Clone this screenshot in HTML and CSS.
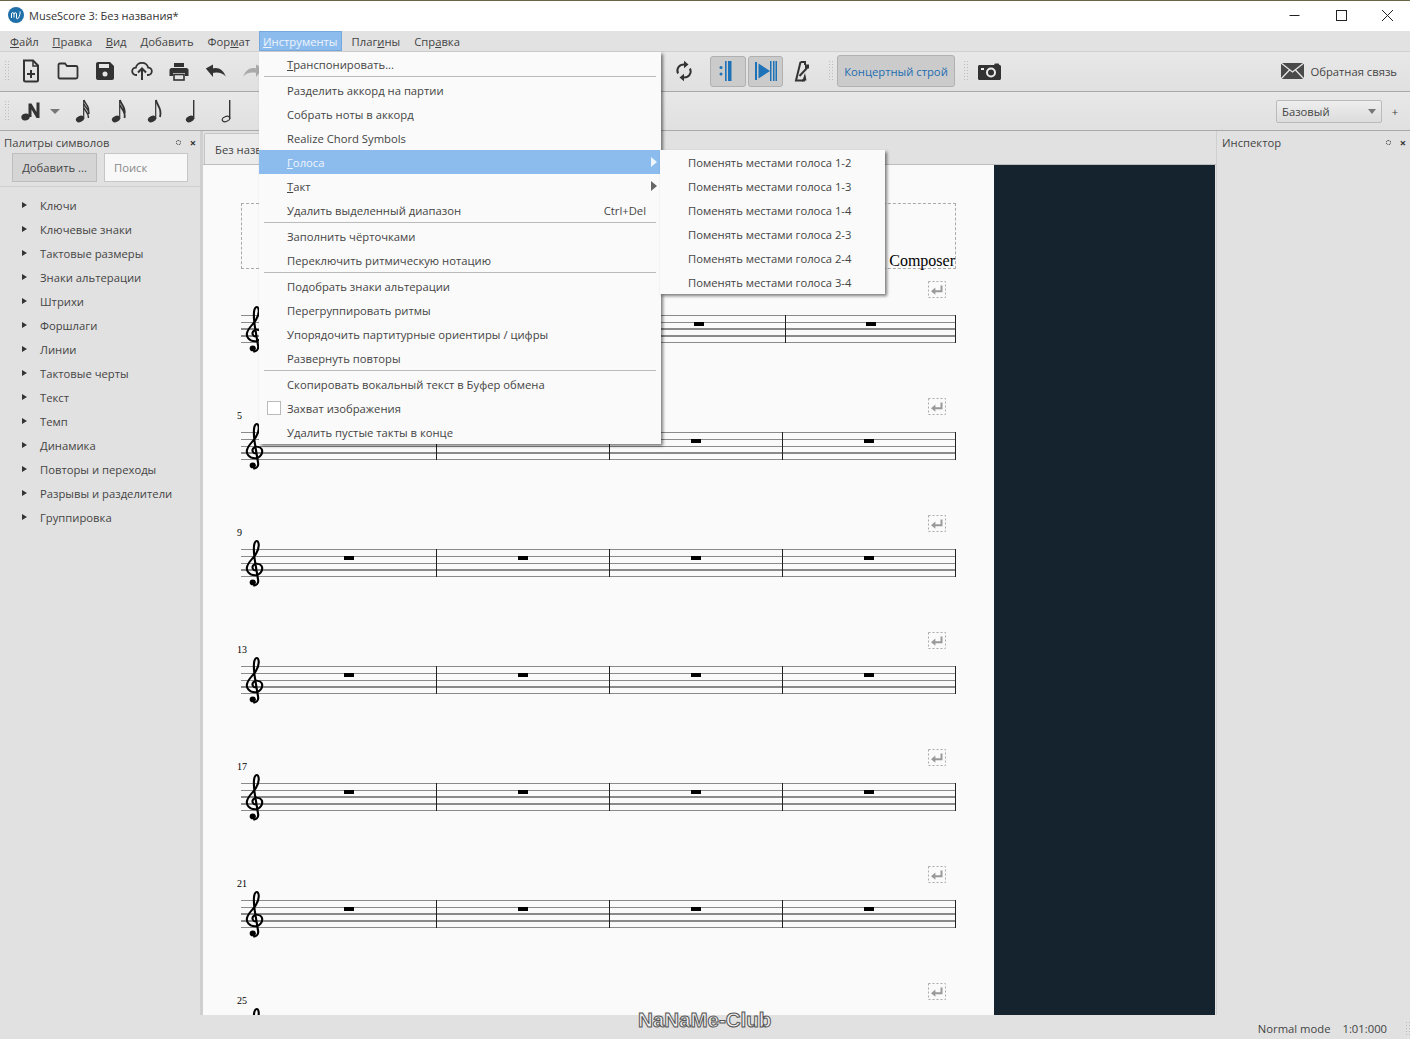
FILE: index.html
```html
<!DOCTYPE html>
<html lang="ru">
<head>
<meta charset="utf-8">
<title>MuseScore 3: Без названия*</title>
<link rel="stylesheet" href="styles.css">
</head>
<body>
<svg class="defs" width="0" height="0" aria-hidden="true">
  <symbol id="clef" viewBox="0 0 18 48" preserveAspectRatio="none">
    <path d="M10 31.500C7.400 31.600 5.800 28.600 7.400 26.400C9.200 24 13.600 24.400 15 27.200C16.600 31 13.600 36.300 8.800 36.300C4 36.300 1 32 1.800 28C2.800 23 7.400 19.400 9.800 15C12.200 10.400 13 6 11.800 3C11 1 9.200 1.800 8.400 5C7.600 9 8 16 9.400 25L11.800 41C12.400 45 9.600 47 7.400 46.400" fill="none" stroke="#000" stroke-width="1.900"/>
    <circle cx="7" cy="43.400" r="2.800" fill="#000"/>
  </symbol>
  <symbol id="break" viewBox="0 0 18 18">
    <rect x=".5" y=".5" width="17" height="16" fill="none" stroke="#aaa" stroke-dasharray="2 2"/>
    <path d="M13.500 4.500V10.200H6.500" fill="none" stroke="#999" stroke-width="2"/>
    <path d="M3 10.200L7.400 6.600V13.800Z" fill="#999"/>
  </symbol>
</svg>

<div class="app">
  <header class="titlebar">
    <div class="app-logo">
      <svg viewBox="0 0 16 16" width="16" height="16"><circle cx="8" cy="8" r="8" fill="#1f6fa8"/><path d="M3.500 11V7C3.500 5.200 6 5.200 6 7V10.500M6 7C6 5.200 8.500 5.200 8.500 7V11C8.500 12 10 12 10.500 11C11.500 9 12.500 6 12 4.500" fill="none" stroke="#fff" stroke-width="1"/></svg>
    </div>
    <span class="app-title">MuseScore 3: Без названия*</span>
    <div class="win-controls">
      <svg viewBox="0 0 46 20" width="46" height="20"><path d="M17.500 10.500H27.500" stroke="#222" fill="none"/></svg>
      <svg viewBox="0 0 46 20" width="46" height="20"><rect x="18.500" y="5.500" width="10" height="10" stroke="#222" fill="none"/></svg>
      <svg viewBox="0 0 46 20" width="46" height="20"><path d="M18 5L29 16M29 5L18 16" stroke="#222" fill="none"/></svg>
    </div>
  </header>

  <nav class="menubar">
    <span class="menu-title"><u>Ф</u>айл</span>
    <span class="menu-title"><u>П</u>равка</span>
    <span class="menu-title"><u>В</u>ид</span>
    <span class="menu-title"><u>Д</u>обавить</span>
    <span class="menu-title">Фор<u>м</u>ат</span>
    <span class="menu-title menu-open"><u>И</u>нструменты</span>
    <span class="menu-title">Плаг<u>и</u>ны</span>
    <span class="menu-title">Спр<u>а</u>вка</span>
  </nav>

  <div class="toolbar toolbar-file">
    <span class="grip"></span>
    <span class="tool"><svg viewBox="0 0 20 24" width="20" height="24"><path d="M3 1.500H12L17 6.500V21C17 22 16.500 22.500 15.500 22.500H4.500C3.500 22.500 3 22 3 21Z" fill="none" stroke="#333" stroke-width="2"/><path d="M12 2V7H17" fill="none" stroke="#333" stroke-width="1.500"/><path d="M10 11V19M6 15H14" stroke="#333" stroke-width="2"/></svg></span>
    <span class="tool"><svg viewBox="0 0 22 18" width="22" height="18"><path d="M1.500 3C1.500 2 2 1.500 3 1.500H8L10 4H19C20 4 20.500 4.500 20.500 5.500V15C20.500 16 20 16.500 19 16.500H3C2 16.500 1.500 16 1.500 15Z" fill="none" stroke="#333" stroke-width="1.800"/></svg></span>
    <span class="tool"><svg viewBox="0 0 20 20" width="20" height="20"><path d="M1 3C1 1.800 1.800 1 3 1H15L19 5V17C19 18.200 18.200 19 17 19H3C1.800 19 1 18.200 1 17Z" fill="#333"/><rect x="4" y="3" width="10" height="4" fill="#e6e6e6"/><circle cx="10" cy="13" r="2.500" fill="#e6e6e6"/></svg></span>
    <span class="tool"><svg viewBox="0 0 22 20" width="22" height="20"><path d="M6 14H5C2.800 14 1.200 12.300 1.200 10.300C1.200 8.300 2.800 6.700 4.800 6.700C5.500 3.800 8 1.800 11 1.800C14 1.800 16.500 3.800 17.200 6.700C19.200 6.700 20.800 8.300 20.800 10.300C20.800 12.300 19.200 14 17 14H16" fill="none" stroke="#333" stroke-width="1.800"/><path d="M11 19V8M7 11.500L11 7.500L15 11.500" fill="none" stroke="#333" stroke-width="2"/></svg></span>
    <span class="tool"><svg viewBox="0 0 20 19" width="20" height="19"><rect x="5" y="1" width="10" height="4" fill="#333"/><path d="M2.500 6H17.500C18.500 6 19.500 7 19.500 8V14H16V11H4V14H.5V8C.5 7 1.500 6 2.500 6Z" fill="#333"/><rect x="5" y="12.500" width="10" height="5.500" fill="none" stroke="#333" stroke-width="1.600"/></svg></span>
    <span class="tool"><svg viewBox="0 0 22 14" width="22" height="14"><path d="M7 4.500C13 2.500 18.500 5.500 20.800 12.500C17.500 9 13 7.500 7 9Z" fill="#333"/><path d="M8 .5V13L.8 4.500Z" fill="#333"/></svg></span>
    <span class="tool"><svg class="flip" viewBox="0 0 22 14" width="22" height="14"><path d="M7 4.500C13 2.500 18.500 5.500 20.800 12.500C17.500 9 13 7.500 7 9Z" fill="#aaa"/><path d="M8 .5V13L.8 4.500Z" fill="#aaa"/></svg></span>
    <span class="toolbar-hidden"></span>
    <span class="tool"><svg viewBox="0 0 18 22" width="18" height="22"><path d="M3 13.500C1 9 4 4.500 9 4.500H10M15 8.500C17 13 14 17.500 9 17.500H8" fill="none" stroke="#333" stroke-width="2"/><path d="M9 .8L13.500 4.500L9 8.200ZM9 13.800L4.500 17.500L9 21.200Z" fill="#333"/></svg></span>
    <span class="toggle toggle-repeat"><svg viewBox="0 0 20 22" width="20" height="22"><circle cx="3" cy="7.500" r="1.500" fill="#1d72b8"/><circle cx="3" cy="14" r="1.500" fill="#1d72b8"/><rect x="7" y="1" width="1.600" height="20" fill="#1d72b8"/><rect x="10" y="1" width="3.500" height="20" fill="#1d72b8"/></svg></span>
    <span class="toggle toggle-next"><svg viewBox="0 0 22 22" width="22" height="22"><rect x="0" y="2" width="2" height="18" fill="#1d72b8"/><path d="M3.500 3.500L15 11L3.500 18.500Z" fill="#1d72b8"/><rect x="15" y="1" width="1.500" height="20" fill="#1d72b8"/><rect x="18" y="1" width="1.500" height="20" fill="#1d72b8"/><rect x="20.500" y="1" width="1.500" height="20" fill="#1d72b8"/></svg></span>
    <span class="tool"><svg viewBox="0 0 16 22" width="16" height="22"><path d="M6.500 2H11V5M9 20.500H2L6.500 2" fill="none" stroke="#333" stroke-width="2"/><path d="M11 20.500H8M13 8L5.500 16" stroke="#333" stroke-width="2"/><path d="M8.500 20.500H12.500L11 13Z" fill="#333"/><path d="M11 4.500H15V8.500H11Z" fill="#333"/></svg></span>
    <span class="grip grip-mid"></span>
    <span class="concert">Концертный строй</span>
    <span class="grip grip-mid grip-after"></span>
    <span class="tool"><svg viewBox="0 0 23 17" width="23" height="17"><path d="M1.500 2H16L17 .5H20.500L21.500 2C22.300 2 23 2.700 23 3.500V15.500C23 16.300 22.300 17 21.500 17H1.500C.7 17 0 16.300 0 15.500V3.500C0 2.700 .7 2 1.500 2Z" fill="#333"/><circle cx="13" cy="9.500" r="4" fill="none" stroke="#eee" stroke-width="2"/><rect x="3" y="5" width="3" height="2" fill="#eee"/></svg></span>
    <span class="feedback">
      <svg viewBox="0 0 23 16" width="23" height="16"><rect width="23" height="16" fill="#4a4a4a"/><path d="M0 0L11.500 9L23 0M0 16L8.500 7M23 16L14.500 7" fill="none" stroke="#e8e8e8" stroke-width="1.300"/></svg>
      <span>Обратная связь</span>
    </span>
  </div>

  <div class="toolbar toolbar-notes">
    <span class="grip"></span>
    <span class="tool note-n"><svg viewBox="0 0 20 20" width="20" height="20"><ellipse cx="4.500" cy="16" rx="4.200" ry="3.300" fill="#333" transform="rotate(-18 4.500 16)"/><path d="M7.500 16V2.500H10.500L15.500 11V1.500H18.500V17H15.500L10.500 8.500V16Z" fill="#333"/></svg></span>
    <span class="note-arrow"></span>
    <span class="tool"><svg viewBox="0 0 16 24" width="16" height="24"><ellipse cx="5" cy="20" rx="4.300" ry="3.100" fill="#333" transform="rotate(-22 5 20)"/><path d="M8.700 20V1" stroke="#333" stroke-width="1.200"/><path d="M9 1C10 5 14.500 7 13.500 12M9 5C10 9 14.500 10 14 15M9 9C10 12 14 14 13.500 19" fill="none" stroke="#333" stroke-width="1.500"/></svg></span>
    <span class="tool"><svg viewBox="0 0 16 24" width="16" height="24"><ellipse cx="5" cy="20" rx="4.300" ry="3.100" fill="#333" transform="rotate(-22 5 20)"/><path d="M8.700 20V1" stroke="#333" stroke-width="1.200"/><path d="M9 1C10 6 15 8 13.500 15M9 6C10 10 15 12 13.500 19" fill="none" stroke="#333" stroke-width="1.800"/></svg></span>
    <span class="tool"><svg viewBox="0 0 16 24" width="16" height="24"><ellipse cx="5" cy="20" rx="4.300" ry="3.100" fill="#333" transform="rotate(-22 5 20)"/><path d="M8.700 20V1" stroke="#333" stroke-width="1.200"/><path d="M9 1C10 7 15.500 9 13 18" fill="none" stroke="#333" stroke-width="1.800"/></svg></span>
    <span class="tool"><svg viewBox="0 0 12 24" width="12" height="24"><ellipse cx="5" cy="20" rx="4.300" ry="3.100" fill="#333" transform="rotate(-22 5 20)"/><path d="M8.700 20V1" stroke="#333" stroke-width="1.400"/></svg></span>
    <span class="tool"><svg viewBox="0 0 12 24" width="12" height="24"><ellipse cx="5" cy="20" rx="3.900" ry="2.500" fill="none" stroke="#333" stroke-width="1.200" transform="rotate(-22 5 20)"/><path d="M8.700 20V1" stroke="#333" stroke-width="1.400"/></svg></span>
    <span class="workspace">
      <span class="combo">Базовый<span class="combo-arrow"></span></span>
      <span class="plus">+</span>
    </span>
  </div>

  <main class="workspace-main">
    <aside class="palette">
      <div class="dock-head">
        <span>Палитры символов</span>
        <span class="dock-icons"><i class="dock-float"></i><i class="dock-close">×</i></span>
      </div>
      <div class="palette-actions">
        <span class="add-btn">Добавить ...</span>
        <span class="search-box">Поиск</span>
      </div>
      <ul class="palette-list">
        <li>Ключи</li>
        <li>Ключевые знаки</li>
        <li>Тактовые размеры</li>
        <li>Знаки альтерации</li>
        <li>Штрихи</li>
        <li>Форшлаги</li>
        <li>Линии</li>
        <li>Тактовые черты</li>
        <li>Текст</li>
        <li>Темп</li>
        <li>Динамика</li>
        <li>Повторы и переходы</li>
        <li>Разрывы и разделители</li>
        <li>Группировка</li>
      </ul>
    </aside>

    <section class="center">
      <div class="tabbar"><span class="tab">Без названия*</span></div>
      <div class="canvas">
        <div class="page">
          <div class="title-frame"><span class="composer">Composer</span></div>

          <div class="system system-first">
            <svg class="brk"><use href="#break"/></svg>
            <div class="staff"><svg class="clef"><use href="#clef"/></svg>
              <div class="bar"><i></i></div><div class="bar"><i></i></div><div class="bar"><i></i></div><div class="bar"><i></i></div>
            </div>
          </div>

          <div class="system"><span class="num">5</span><svg class="brk"><use href="#break"/></svg>
            <div class="staff"><svg class="clef"><use href="#clef"/></svg>
              <div class="bar"><i></i></div><div class="bar"><i></i></div><div class="bar"><i></i></div><div class="bar"><i></i></div>
            </div>
          </div>
          <div class="system"><span class="num">9</span><svg class="brk"><use href="#break"/></svg>
            <div class="staff"><svg class="clef"><use href="#clef"/></svg>
              <div class="bar"><i></i></div><div class="bar"><i></i></div><div class="bar"><i></i></div><div class="bar"><i></i></div>
            </div>
          </div>
          <div class="system"><span class="num">13</span><svg class="brk"><use href="#break"/></svg>
            <div class="staff"><svg class="clef"><use href="#clef"/></svg>
              <div class="bar"><i></i></div><div class="bar"><i></i></div><div class="bar"><i></i></div><div class="bar"><i></i></div>
            </div>
          </div>
          <div class="system"><span class="num">17</span><svg class="brk"><use href="#break"/></svg>
            <div class="staff"><svg class="clef"><use href="#clef"/></svg>
              <div class="bar"><i></i></div><div class="bar"><i></i></div><div class="bar"><i></i></div><div class="bar"><i></i></div>
            </div>
          </div>
          <div class="system"><span class="num">21</span><svg class="brk"><use href="#break"/></svg>
            <div class="staff"><svg class="clef"><use href="#clef"/></svg>
              <div class="bar"><i></i></div><div class="bar"><i></i></div><div class="bar"><i></i></div><div class="bar"><i></i></div>
            </div>
          </div>
          <div class="system"><span class="num">25</span><svg class="brk"><use href="#break"/></svg>
            <div class="staff"><svg class="clef"><use href="#clef"/></svg>
              <div class="bar"><i></i></div><div class="bar"><i></i></div><div class="bar"><i></i></div><div class="bar"><i></i></div>
            </div>
          </div>
        </div>
        <div class="desk"></div>
      </div>
    </section>

    <aside class="inspector">
      <div class="dock-head">
        <span>Инспектор</span>
        <span class="dock-icons"><i class="dock-float"></i><i class="dock-close">×</i></span>
      </div>
    </aside>
  </main>

  <footer class="statusbar">
    <span class="status-mode">Normal mode</span>
    <span class="status-pos">1:01:000</span>
    <span class="grip grip-status"></span>
  </footer>
</div>

<div class="popup popup-main">
  <div class="item"><u>Т</u>ранспонировать...</div>
  <div class="sep"></div>
  <div class="item">Разделить аккорд на партии</div>
  <div class="item">Собрать ноты в аккорд</div>
  <div class="item">Realize Chord Symbols</div>
  <div class="item item-active"><u>Г</u>олоса<span class="sub-arrow"></span></div>
  <div class="item"><u>Т</u>акт<span class="sub-arrow"></span></div>
  <div class="item">Удалить выделенный диапазон<span class="shortcut">Ctrl+Del</span></div>
  <div class="sep"></div>
  <div class="item">Заполнить чёрточками</div>
  <div class="item">Переключить ритмическую нотацию</div>
  <div class="sep"></div>
  <div class="item">Подобрать знаки альтерации</div>
  <div class="item">Перегруппировать ритмы</div>
  <div class="item">Упорядочить партитурные ориентиры / цифры</div>
  <div class="item">Развернуть повторы</div>
  <div class="sep"></div>
  <div class="item">Скопировать вокальный текст в Буфер обмена</div>
  <div class="item"><span class="check"></span>Захват изображения</div>
  <div class="item">Удалить пустые такты в конце</div>
</div>

<div class="popup popup-sub">
  <div class="item">Поменять местами голоса 1-2</div>
  <div class="item">Поменять местами голоса 1-3</div>
  <div class="item">Поменять местами голоса 1-4</div>
  <div class="item">Поменять местами голоса 2-3</div>
  <div class="item">Поменять местами голоса 2-4</div>
  <div class="item">Поменять местами голоса 3-4</div>
</div>

<div class="watermark">NaNaMe-Club</div>
</body>
</html>
```

FILE: styles.css
```css
* { box-sizing: border-box; }
html, body { margin: 0; height: 100%; overflow: hidden; }
body {
  font-family: "Open Sans", "Noto Sans", sans-serif;
  font-size: 11.250px;
  color: #444;
  background: #e1e1e1;
}
.defs { position: absolute; }
.app { display: flex; flex-direction: column; height: 1039px; }

.titlebar {
  height: 31px;
  display: flex;
  align-items: center;
  padding: 0 0 2px 8px;
  background: #fff;
  border-top: 1px solid #6b6648;
  color: #333;
}
.app-logo { display: flex; margin-right: 5px; }
.app-title { font-size: 11px; }
.win-controls { margin-left: auto; display: flex; align-items: center; }
.win-controls svg { display: block; }

.menubar {
  height: 21px;
  display: flex;
  align-items: stretch;
  padding-left: 3px;
  background: #e2e2e2;
  border-bottom: 1px solid #d0d0d0;
}
.menu-title { display: flex; align-items: center; padding: 0 7px; white-space: nowrap; }
.menu-title:nth-child(2), .menu-title:nth-child(3) { margin-left: -.5px; }
.menu-open { background: #8cbcee; color: #eef5fc; border: 1px solid #76a8dc; padding: 0 3px; margin: 0 3px 0 2px; }

.toolbar {
  display: flex;
  align-items: center;
  padding-left: 4px;
  background: linear-gradient(#e8e8e8, #e0e0e0);
  border-bottom: 1px solid #a9a9a9;
}
.toolbar-file { height: 40px; padding-bottom: 1px; }
.toolbar-notes { height: 39px; }
.grip {
  width: 5px;
  height: 22px;
  flex: none;
  background-image: radial-gradient(#bbb 1px, transparent 1px);
  background-size: 3px 3px;
}
.tool { width: 37px; height: 30px; flex: none; display: flex; align-items: center; justify-content: center; }
.toolbar .grip:first-child { margin-right: 3px; }
.flip { transform: scaleX(-1); }
.toolbar-hidden { width: 394px; flex: none; }
.toggle {
  height: 31px;
  display: flex;
  align-items: center;
  justify-content: center;
  flex: none;
  background: #cbcbcb;
  border: 1px solid #b0b0b0;
  border-radius: 3px;
}
.toggle-repeat { width: 36px; margin-left: 8px; }
.toggle-next { width: 35px; margin-left: 2px; }
.grip-mid { margin: 0 4px 0 8px; }
.grip-after { margin-right: 3px; }
.concert {
  width: 118px;
  height: 32px;
  flex: none;
  display: flex;
  align-items: center;
  justify-content: center;
  background: #cbcbcb;
  border: 1px solid #b0b0b0;
  border-radius: 3px;
  color: #1d6cb0;
}
.feedback { margin-left: auto; display: flex; align-items: center; gap: 6px; padding-right: 13px; }
.toolbar-notes .tool { width: 36px; }
.toolbar-notes .note-n { width: 38px; }
.note-arrow { width: 0; height: 0; border: 5px solid transparent; border-top: 5px solid #777; border-bottom: 0; margin: 0 5px 0 0; flex: none; }
.workspace { margin-left: auto; display: flex; align-items: center; padding-right: 7px; }
.combo {
  width: 106px;
  height: 23px;
  display: flex;
  align-items: center;
  justify-content: space-between;
  padding: 0 5px;
  background: linear-gradient(#eee, #dcdcdc);
  border: 1px solid #bbb;
  border-radius: 2px;
}
.combo-arrow { width: 0; height: 0; border: 4px solid transparent; border-top: 5px solid #777; border-bottom: 0; }
.plus { width: 16px; margin-left: 5px; text-align: center; }

.workspace-main { flex: 1; display: flex; min-height: 0; }
.palette { width: 200px; flex: none; }
.dock-head { height: 22px; display: flex; align-items: center; justify-content: space-between; padding: 1px 4px 0; }
.dock-icons { display: flex; align-items: center; gap: 9px; }
.dock-float { width: 5px; height: 5px; border: 1px dotted #333; border-radius: 50%; }
.dock-close { font-style: normal; font-weight: 700; font-size: 11px; line-height: 10px; color: #333; }
.palette-actions { display: flex; gap: 7px; padding: 0 12px; height: 34px; border-bottom: 1px solid #cfcfcf; }
.add-btn, .search-box { height: 29px; display: flex; align-items: center; flex: none; }
.add-btn { width: 85px; justify-content: center; background: #d5d5d5; border: 1px solid #bdbdbd; }
.search-box { width: 84px; padding-left: 9px; background: #f8f8f8; border: 1px solid #c6c6c6; color: #888; }
.palette-list { list-style: none; margin: 6px 0 0; padding: 0; }
.palette-list li { height: 24px; display: flex; align-items: center; padding-left: 40px; position: relative; }
.palette-list li::before {
  content: "";
  position: absolute;
  left: 22px;
  top: calc(50% - 3.500px);
  border: 3.500px solid transparent;
  border-left: 5px solid #333;
  border-right: 0;
}

.center { flex: 1; min-width: 0; display: flex; flex-direction: column; border-left: 3px solid #cfcfcf; }
.tabbar { height: 34px; flex: none; padding: 2px 0 0 1px; border-bottom: 1px solid #bdbdbd; }
.tab { display: flex; align-items: center; width: 120px; height: 31px; padding-left: 10px; background: #ebebeb; border: 1px solid #c4c4c4; border-bottom: 0; border-radius: 2px 2px 0 0; }
.canvas { flex: 1; min-height: 0; display: flex; overflow: hidden; }
.page { width: 791px; flex: none; padding: 38px 38px 0; background: #fafafa; color: #000; }
.desk { flex: 1; background: #15232f; margin-right: 1px; }

.title-frame { height: 66px; border: 1px dashed #aaa; display: flex; align-items: flex-end; justify-content: flex-end; }
.composer { font: 16px/18px "Liberation Serif", serif; margin-bottom: -2px; }

.system { height: 117px; padding-top: 46px; position: relative; }
.num { position: absolute; left: -4px; top: 24px; font: 10px/12px "Liberation Serif", serif; }
.brk { position: absolute; right: 10px; top: 12px; width: 18px; height: 18px; }
.staff {
  position: relative;
  height: 28px;
  display: grid;
  grid-template-columns: 196px 173px 173px 173px;
  background: repeating-linear-gradient(#8a8a8a 0, #8a8a8a 1.400px, transparent 1.400px, transparent 6.750px);
}
.system-first .staff { grid-template-columns: 200px 172px 173px 170px; }
.clef { position: absolute; left: 4px; top: -10px; width: 20px; height: 48px; }
.bar { border-right: 1.500px solid #222; display: flex; justify-content: center; padding-top: 6.500px; }
.bar:first-of-type { padding-left: 20px; }
.bar i { width: 10px; height: 4.500px; background: #000; }

.inspector { width: 194px; flex: none; border-left: 1px solid #cfcfcf; }
.inspector .dock-head { padding-left: 5px; }

.statusbar { height: 24px; flex: none; display: flex; align-items: center; justify-content: flex-end; padding-top: 2px; }
.status-pos { margin-left: 12px; }
.grip-status { margin: 0 0 0 18px; width: 5px; height: 14px; }

.popup {
  position: absolute;
  background: #fafafa;
  box-shadow: 2px 2px 3px rgba(0,0,0,.5);
  color: #444;
}
.popup-main { left: 259px; top: 52px; width: 402px; height: 392px; }
.popup-sub { left: 660px; top: 150px; width: 225px; height: 144px; }
.item { height: 24px; display: flex; align-items: center; padding-left: 28px; position: relative; white-space: nowrap; }
.item-active { background: #8cbcee; color: #eef5fc; }
.sep { height: 2px; margin: 0 5px; border-top: 1px solid #bbb; }
.shortcut { margin-left: auto; padding-right: 15px; }
.sub-arrow { position: absolute; right: 4px; top: 7px; border: 5px solid transparent; border-left: 6px solid #666; border-right: 0; }
.item-active .sub-arrow { border-left-color: #eef5fc; }
.check { position: absolute; left: 8px; top: 5px; width: 14px; height: 14px; border: 1px solid #bbb; background: #fff; }

.watermark {
  position: absolute;
  left: 638px;
  top: 1007px;
  font: 700 20.500px/26px "Liberation Sans", sans-serif;
  color: #efefef;
  -webkit-text-stroke: 1px #555;
}
```
